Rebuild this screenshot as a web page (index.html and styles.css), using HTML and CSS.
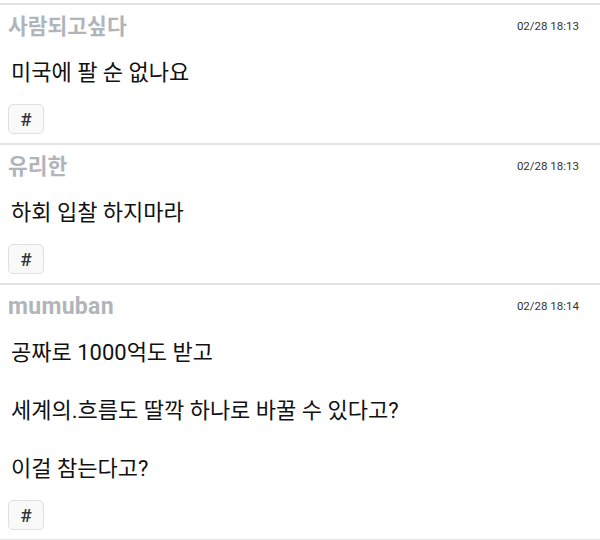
FILE: index.html
```html
<!DOCTYPE html>
<html lang="ko">
<head>
    <meta charset="UTF-8">
    <meta name="viewport" content="width=device-width, initial-scale=1.0">
    <title>댓글</title>
    <link rel="stylesheet" href="styles.css">
</head>
<body>
    <div class="comment-list">
        <div class="comment">
            <div class="comment-head">
                <span class="nick">사람되고싶다</span>
                <span class="date">02/28 18:13</span>
            </div>
            <div class="comment-body">
                <p>미국에 팔 순 없나요</p>
            </div>
            <button class="tag-btn">#</button>
        </div>
        <div class="comment">
            <div class="comment-head">
                <span class="nick">유리한</span>
                <span class="date">02/28 18:13</span>
            </div>
            <div class="comment-body">
                <p>하회 입찰 하지마라</p>
            </div>
            <button class="tag-btn">#</button>
        </div>
        <div class="comment">
            <div class="comment-head">
                <span class="nick latin">mumuban</span>
                <span class="date">02/28 18:14</span>
            </div>
            <div class="comment-body">
                <p>공짜로 1000억도 받고</p>
                <p>세계의.흐름도 딸깍 하나로 바꿀 수 있다고?</p>
                <p>이걸 참는다고?</p>
            </div>
            <button class="tag-btn">#</button>
        </div>
    </div>
</body>
</html>
```

FILE: styles.css
```css
body {
    margin: 0;
    padding-top: 3px;
    background-color: #fff;
    font-family: Roboto, "Noto Sans CJK KR", sans-serif;
    color: #222;
}

.comment-list {
    border-bottom: 2px solid #e4e4e4;
}

.comment {
    border-top: 2px solid #e4e4e4;
    padding: 9px 21px 9px 8px;
}

.comment-head {
    display: flex;
    justify-content: space-between;
    align-items: flex-start;
}

.comment-head .nick {
    font-size: 21.5px;
    font-weight: bold;
    line-height: 26px;
    color: #b1b5ba;
}

.comment-head .nick.latin {
    font-size: 23px;
    letter-spacing: 0.3px;
}

.comment-head .date {
    font-size: 11.5px;
    line-height: 14px;
    margin-top: 5px;
    color: #333;
}

.comment-body {
    margin-top: 18px;
    padding-left: 3px;
}

.comment-body p {
    margin: 0;
    font-size: 22px;
    line-height: 29px;
    color: #111;
}

.comment-body p + p {
    margin-top: 29px;
}

.tag-btn {
    display: block;
    margin-top: 17px;
    width: 36px;
    height: 30px;
    padding: 0;
    border: 1px solid #e0e0e0;
    border-radius: 5px;
    background-color: #f9f9f9;
    font-family: Roboto, sans-serif;
    font-size: 19px;
    font-weight: 500;
    color: #333;
}
```
